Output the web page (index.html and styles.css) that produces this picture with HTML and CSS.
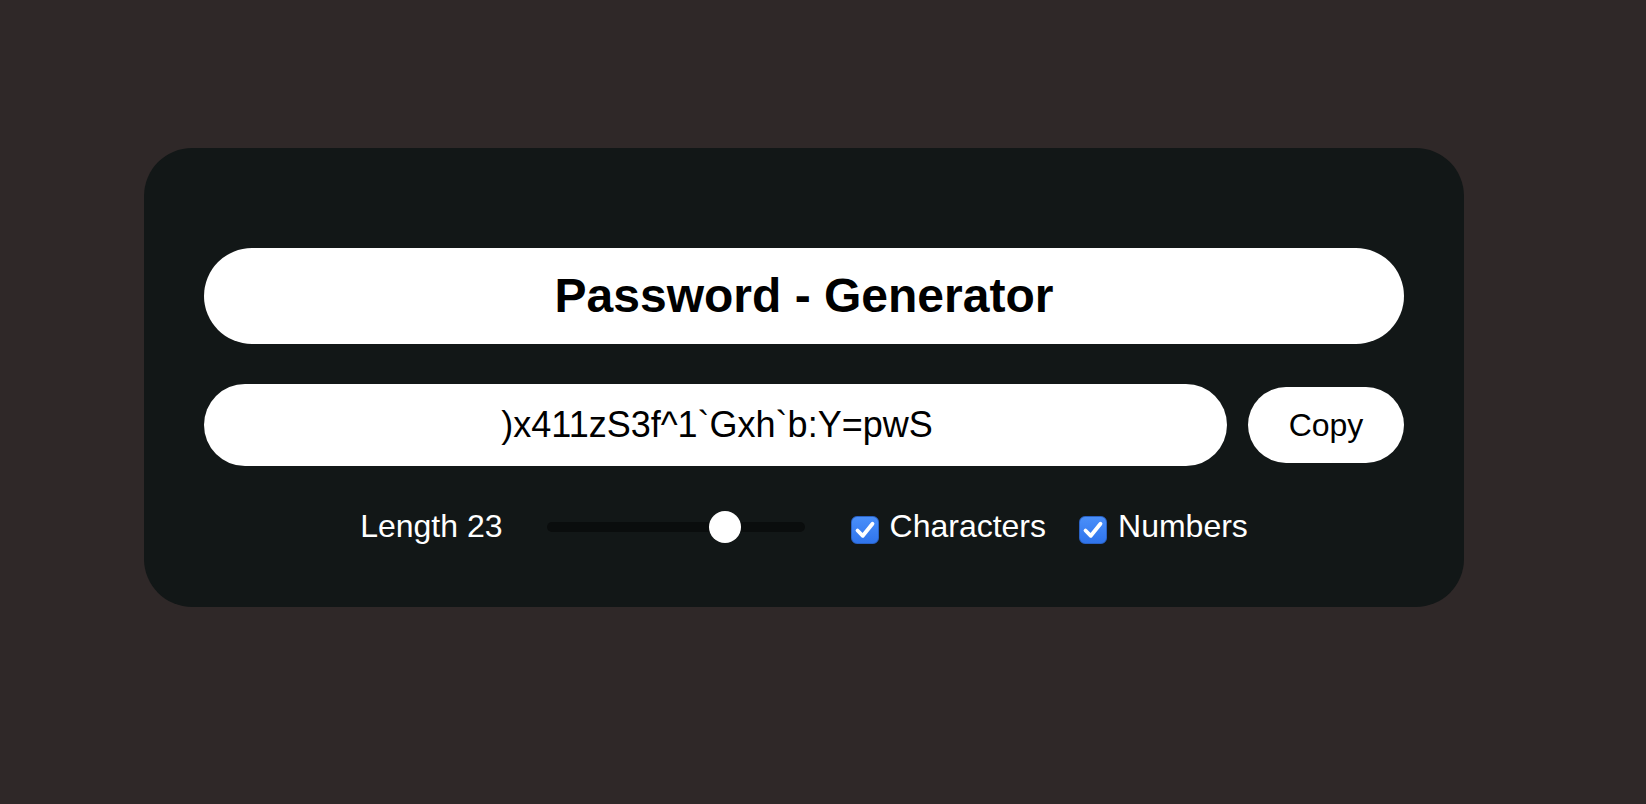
FILE: index.html
```html
<!DOCTYPE html>
<html lang="en">
<head>
<meta charset="utf-8">
<title>Password - Generator</title>
<link rel="stylesheet" href="styles.css">
</head>
<body>
  <main class="card">
    <h1 class="title">Password - Generator</h1>
    <div class="output-row">
      <input class="password" type="text" value=")x411zS3f^1`Gxh`b:Y=pwS" readonly>
      <button class="copy" type="button">Copy</button>
    </div>
    <div class="controls">
      <span class="length-label">Length 23</span>
      <input class="slider" type="range" min="5" max="30" value="23">
      <label class="option">
        <span class="box"><svg viewBox="0 0 28 28" width="28" height="28"><path d="M6.5 14.5 L11.8 19.8 L21.5 7.8" fill="none" stroke="#fff" stroke-width="3.8" stroke-linecap="round" stroke-linejoin="round"/></svg></span>
        <span class="option-text">Characters</span>
      </label>
      <label class="option">
        <span class="box"><svg viewBox="0 0 28 28" width="28" height="28"><path d="M6.5 14.5 L11.8 19.8 L21.5 7.8" fill="none" stroke="#fff" stroke-width="3.8" stroke-linecap="round" stroke-linejoin="round"/></svg></span>
        <span class="option-text">Numbers</span>
      </label>
    </div>
  </main>
</body>
</html>
```

FILE: styles.css
```css
html, body {
  margin: 0;
  padding: 0;
}

body {
  background: #2f2828;
  font-family: "Liberation Sans", Arial, Helvetica, sans-serif;
  height: 804px;
  overflow: hidden;
}

.card {
  box-sizing: border-box;
  width: 1320px;
  height: 459px;
  margin: 148px 0 0 144px;
  padding: 100px 60px 0;
  background: #121717;
  border-radius: 48px;
}

.title {
  margin: 0;
  height: 96px;
  line-height: 96px;
  background: #ffffff;
  border-radius: 48px;
  color: #000;
  font-size: 48px;
  font-weight: 700;
  text-align: center;
}

.output-row {
  display: flex;
  align-items: center;
  gap: 21px;
  margin-top: 40px;
}

.password {
  flex: 1;
  box-sizing: border-box;
  height: 82px;
  border: none;
  border-radius: 41px;
  background: #ffffff;
  color: #000;
  font-family: "Liberation Sans", Arial, Helvetica, sans-serif;
  font-size: 36px;
  text-align: center;
  padding: 0 0 0 3px;
  outline: none;
}

.copy {
  width: 156px;
  height: 76px;
  border: none;
  border-radius: 38px;
  background: #ffffff;
  color: #000;
  font-family: "Liberation Sans", Arial, Helvetica, sans-serif;
  font-size: 32px;
  padding: 0;
}

.controls {
  display: flex;
  align-items: center;
  justify-content: center;
  height: 32px;
  margin-top: 45px;
  color: #ffffff;
  font-size: 32px;
}

.length-label {
  margin-right: 44px;
  line-height: 32px;
  padding-bottom: 2px;
}

.slider {
  -webkit-appearance: none;
  appearance: none;
  width: 258px;
  height: 32px;
  margin: 0 46px 0 0;
  background: transparent;
}

.slider::-webkit-slider-runnable-track {
  height: 10px;
  border-radius: 5px;
  background: #0a0d0d;
}

.slider::-webkit-slider-thumb {
  -webkit-appearance: none;
  appearance: none;
  width: 32px;
  height: 32px;
  margin-top: -11px;
  border: none;
  border-radius: 50%;
  background: #ffffff;
}

.option {
  display: flex;
  align-items: center;
  gap: 11px;
}

.option + .option {
  margin-left: 33px;
}

.box {
  display: block;
  width: 28px;
  height: 28px;
  margin-top: 5px;
  box-sizing: border-box;
  border-radius: 6px;
  background: linear-gradient(#4a8ff9, #2f74ec);
  border: 1px solid #2a62c4;
}

.box svg {
  display: block;
  margin: -1px;
}

.option-text {
  line-height: 32px;
  padding-bottom: 2px;
}
```
